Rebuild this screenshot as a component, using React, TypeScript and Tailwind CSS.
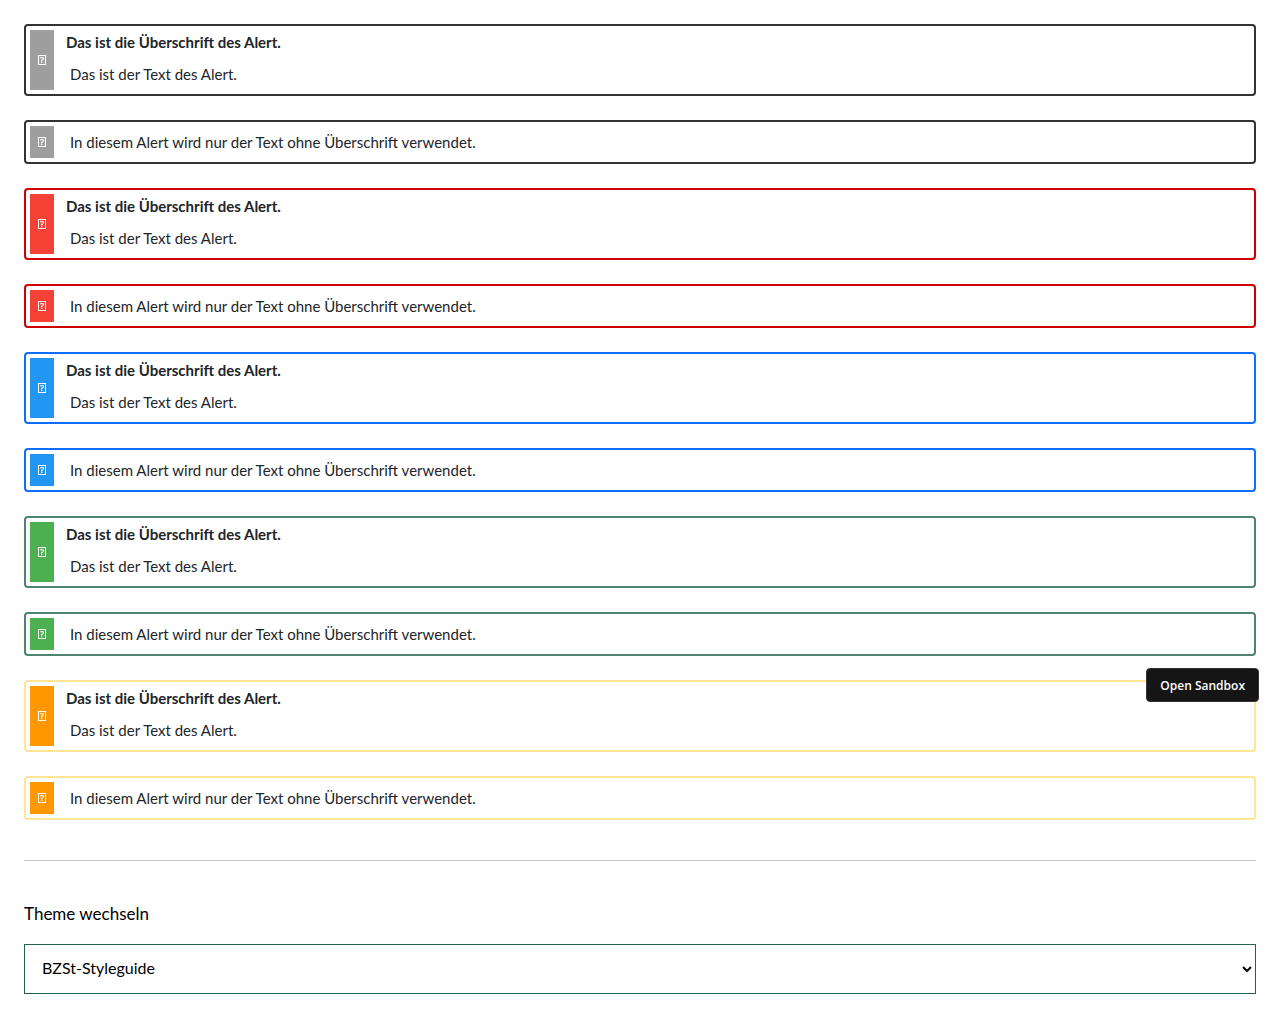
import { useId } from "react";

type Alert = { border: string; badge: string };

const alerts: Alert[] = [
  { border: "border-[#333333]", badge: "bg-[#9e9e9e]" },
  { border: "border-[#cc0000]", badge: "bg-[#f44336]" },
  { border: "border-[#0d6efd]", badge: "bg-[#2196f3]" },
  { border: "border-[#4d8471]", badge: "bg-[#4caf50]" },
  { border: "border-[#ffe694]", badge: "bg-[#ff9800]" },
];

function MissingGlyph() {
  return (
    <svg width="8" height="10" viewBox="0 0 8 10" fill="none" stroke="currentColor" aria-hidden="true">
      <rect x="0.5" y="0.5" width="7" height="9" />
      <path d="M2 2.7H5M5.3 2.2V4.8M3.3 5.3H5M3.6 4.8V6.4M3 7.5H4.3" strokeWidth="1.1" />
    </svg>
  );
}

function AlertBox({ alert, title, text }: { alert: Alert; title?: string; text: string }) {
  return (
    <div role="alert" className={`flex gap-3 rounded border-2 p-1 text-[#212529] ${alert.border}`}>
      <div className={`flex w-6 shrink-0 items-center justify-center text-white ${alert.badge}`}>
        <MissingGlyph />
      </div>
      <div className="min-w-0 flex-1">
        {title && <p className="mb-1 text-[15px] leading-6 font-bold">{title}</p>}
        <p className="px-1 text-[15px] leading-8">{text}</p>
      </div>
    </div>
  );
}

export default function App() {
  const id = useId();
  return (
    <main className="bg-white p-6 font-['Lato',sans-serif]">
      <div className="relative flex flex-col gap-6">
        {alerts.map((alert) => (
          <div key={alert.border} className="flex flex-col gap-6">
            <AlertBox alert={alert} title="Das ist die Überschrift des Alert." text="Das ist der Text des Alert." />
            <AlertBox alert={alert} text="In diesem Alert wird nur der Text ohne Überschrift verwendet." />
          </div>
        ))}
        <button
          type="button"
          className="absolute -right-[3px] bottom-[118px] h-[34px] rounded border border-[#343434] bg-[#151515] px-[13px] pt-[2px] font-['Open_Sans',sans-serif] text-[12px] font-semibold text-white"
        >
          Open Sandbox
        </button>
      </div>
      <hr className="my-10 border-[#c6c6c6]" />
      <label htmlFor={id} className="block text-[17px] leading-[26px] text-black">
        Theme wechseln
      </label>
      <select
        id={id}
        className="mt-[17px] h-[50px] w-full border border-[#23614e] bg-white px-[13px] pb-1 text-[16px] text-black"
      >
        <option>BZSt-Styleguide</option>
      </select>
    </main>
  );
}
